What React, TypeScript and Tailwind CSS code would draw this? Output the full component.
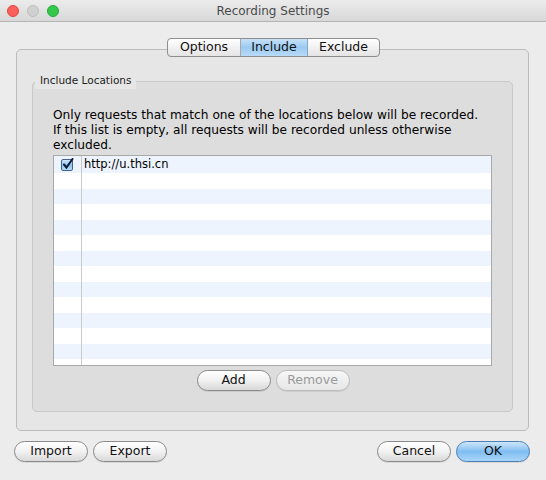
const font = { fontFamily: '"DejaVu Sans", "Liberation Sans", sans-serif' };

function Pill({
  label,
  disabled,
  primary,
  className = "",
}: {
  label: string;
  disabled?: boolean;
  primary?: boolean;
  className?: string;
}) {
  let look =
    "border-[#8a8a8a] bg-gradient-to-b from-white via-[#f1f1f1] to-[#d9d9d9] text-[#111]";
  if (primary)
    look =
      "border-[#4c7db3] bg-gradient-to-b from-[#cfe6fa] via-[#7fbdf0] to-[#a9d6fa] text-[#111]";
  if (disabled)
    look =
      "border-[#bcbcbc] bg-gradient-to-b from-[#f7f7f7] to-[#e6e6e6] text-[#9a9a9a]";
  return (
    <button
      type="button"
      className={`h-[21px] w-[74px] rounded-full border text-[12.5px] leading-none shadow-[0_1px_0_rgba(0,0,0,0.08)] ${look} ${className}`}
    >
      {label}
    </button>
  );
}

function CheckBox() {
  return (
    <svg width="13" height="13" viewBox="0 0 13 13">
      <defs>
        <linearGradient id="cb" x1="0" y1="0" x2="0" y2="1">
          <stop offset="0" stopColor="#d6ebfd" />
          <stop offset="0.5" stopColor="#8ec4f2" />
          <stop offset="1" stopColor="#b9dcfb" />
        </linearGradient>
      </defs>
      <rect x="0.5" y="1.5" width="11" height="11" rx="1.5" fill="url(#cb)" stroke="#41638f" />
      <path d="M3 6.5 L5.5 9.5 L11.5 1" fill="none" stroke="#0d1b33" strokeWidth="2" strokeLinecap="round" />
    </svg>
  );
}

export default function App() {
  const rows = Array.from({ length: 13 }, (_, i) => i);

  return (
    <div className="w-[546px] h-[480px] bg-[#ececec] flex flex-col overflow-hidden" style={font}>
      {/* title bar */}
      <div className="relative h-[22px] shrink-0 bg-gradient-to-b from-[#ececec] to-[#d8d8d8] border-b border-[#b4b4b4] flex items-center justify-center">
        <div className="absolute left-[7px] top-[5px] flex gap-[8px]">
          <span className="w-[12px] h-[12px] rounded-full bg-[#fc605c] border border-[#e2463f]" />
          <span className="w-[12px] h-[12px] rounded-full bg-[#d0d0d0] border border-[#bdbdbd]" />
          <span className="w-[12px] h-[12px] rounded-full bg-[#34c84a] border border-[#24a93a]" />
        </div>
        <span className="text-[12px] text-[#4a4a4a]">Recording Settings</span>
      </div>

      <div className="flex flex-col px-[16px] pr-[17px]">
        {/* tabs */}
        <div className="relative z-10 mt-[16px] flex justify-center">
          <div className="flex h-[19px] rounded-[4px] border border-[#8e8e8e] bg-gradient-to-b from-white to-[#e4e4e4] text-[12.5px] text-[#111] overflow-hidden ml-[2px]">
            <div className="w-[73px] flex items-center justify-center border-r border-[#a8a8a8]">Options</div>
            <div className="w-[67px] flex items-center justify-center bg-gradient-to-b from-[#c6e1f8] via-[#9ccaf1] to-[#b8dbf9] border-r border-[#7fa6cc]">Include</div>
            <div className="w-[71px] flex items-center justify-center">Exclude</div>
          </div>
        </div>

        {/* tab panel */}
        <div className="-mt-[8px] h-[382px] rounded-[5px] border border-[#bcbcbc] bg-[#e6e6e6] pt-[31px] pl-[15px] pr-[15px]">
          <div className="relative h-[331px] rounded-[5px] border border-[#c9c9c9] bg-[#dddddd] px-[20px] pt-[26px]">
            <span className="absolute left-[2px] -top-[9px] px-[5px] bg-[#e6e6e6] text-[10.5px] text-[#222]">
              Include Locations
            </span>
            <p className="text-[12.2px] leading-[15px] text-black">
              Only requests that match one of the locations below will be recorded.
              <br />
              If this list is empty, all requests will be recorded unless otherwise
              <br />
              excluded.
            </p>
            <div className="mt-[2px] h-[211px] border border-[#a9a9a9] bg-white overflow-hidden">
              {rows.map((i) => (
                <div
                  key={i}
                  className={`flex ${i === 0 ? "h-[17px]" : "h-[15.5px]"} ${i % 2 === 0 ? "bg-[#eef4fd]" : "bg-white"}`}
                >
                  <div className="w-[28px] shrink-0 border-r border-[#c9c9c9] flex items-center justify-center">
                    {i === 0 && <CheckBox />}
                  </div>
                  {i === 0 && (
                    <div className="pl-[2px] flex items-center text-[11.5px] text-black">http://u.thsi.cn</div>
                  )}
                </div>
              ))}
              <div className="flex h-[20px]">
                <div className="w-[28px] shrink-0 border-r border-[#c9c9c9]" />
              </div>
            </div>
            <div className="mt-[4px] flex justify-center gap-[5px] ml-[1px]">
              <Pill label="Add" />
              <Pill label="Remove" disabled />
            </div>
          </div>
        </div>
      </div>

      {/* bottom buttons */}
      <div className="mt-[10px] flex justify-between pl-[14px] pr-[16px]">
        <div className="flex gap-[5px]">
          <Pill label="Import" />
          <Pill label="Export" />
        </div>
        <div className="flex gap-[5px]">
          <Pill label="Cancel" />
          <Pill label="OK" primary />
        </div>
      </div>
    </div>
  );
}
